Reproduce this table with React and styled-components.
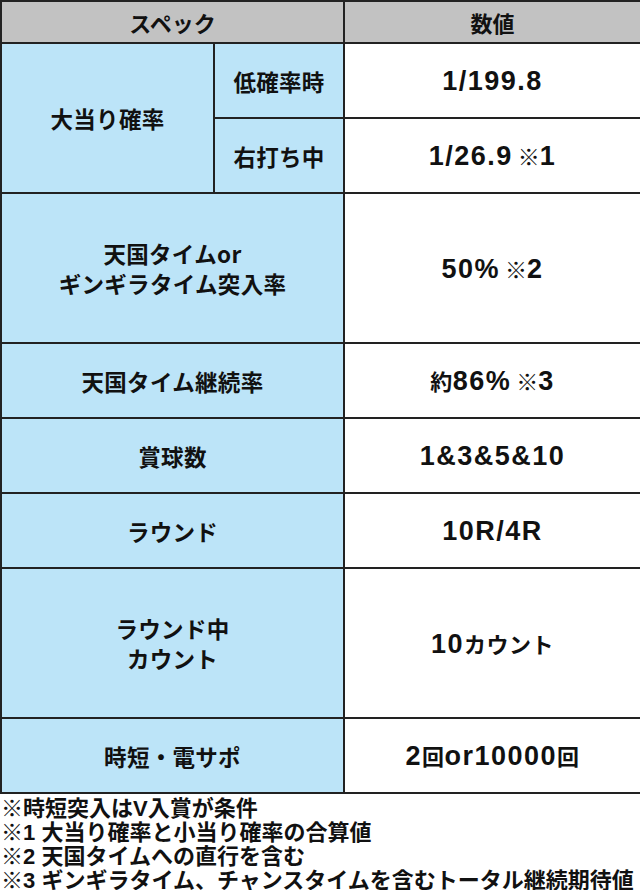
import React from "react";
import styled, { createGlobalStyle } from "styled-components";

const GlobalStyle = createGlobalStyle`
  html, body {
    margin: 0;
    padding: 0;
    background: #ffffff;
  }
  body {
    font-family: "Liberation Sans", "Noto Sans CJK JP", sans-serif;
    color: #111111;
  }
`;

const Page = styled.div`
  width: 640px;
  height: 890px;
  overflow: hidden;
`;

const Table = styled.table`
  width: 640px;
  border-collapse: collapse;
  table-layout: fixed;
`;

const Head = styled.th`
  height: 40px;
  padding: 0;
  background: #c2c2c2;
  border: 2px solid #222222;
  font-family: "Noto Sans CJK JP", sans-serif;
  font-size: 22px;
  font-weight: 700;
  line-height: 26px;
  text-align: center;
  vertical-align: middle;
`;

const Label = styled.td`
  height: ${(p) => p.$h}px;
  padding: 0;
  background: #bce4f8;
  border: 2px solid #222222;
  font-family: "Noto Sans CJK JP", sans-serif;
  font-size: 22.5px;
  font-weight: 700;
  line-height: 30px;
  letter-spacing: 0.3px;
  text-align: center;
  vertical-align: middle;
`;

const Value = styled.td`
  height: ${(p) => p.$h}px;
  padding: 0;
  background: #ffffff;
  border: 2px solid #222222;
  font-family: "Liberation Sans", "Noto Sans CJK JP", sans-serif;
  font-size: 27px;
  font-weight: 700;
  line-height: 30px;
  letter-spacing: 1.5px;
  text-align: center;
  vertical-align: middle;
`;

const Ja = styled.span`
  font-family: "Noto Sans CJK JP", sans-serif;
  font-size: 22px;
  letter-spacing: 0.5px;
`;

const Mark = styled.span`
  font-family: "Noto Sans CJK JP", sans-serif;
  font-size: 22px;
  font-weight: 400;
  letter-spacing: 0;
  margin-left: 5px;
`;

const Notes = styled.div`
  padding: 0 0 0 1px;
`;

const NoteLine = styled.div`
  height: 24px;
  font-family: "Liberation Sans", "Noto Sans CJK JP", sans-serif;
  font-size: 22px;
  font-weight: 700;
  line-height: 24px;
  white-space: nowrap;
`;

const NoteMark = styled.span`
  font-family: "Noto Sans CJK JP", sans-serif;
  font-weight: 400;
`;

const notes = [
  ["", "時短突入はV入賞が条件"],
  ["1 ", "大当り確率と小当り確率の合算値"],
  ["2 ", "天国タイムへの直行を含む"],
  ["3 ", "ギンギラタイム、チャンスタイムを含むトータル継続期待値"],
];

export default function App() {
  return (
    <Page>
      <GlobalStyle />
      <Table>
        <colgroup>
          <col style={{ width: 213 }} />
          <col style={{ width: 130 }} />
          <col style={{ width: 297 }} />
        </colgroup>
        <tbody>
          <tr>
            <Head colSpan={2}>スペック</Head>
            <Head>数値</Head>
          </tr>
          <tr>
            <Label rowSpan={2} $h={73}>大当り確率</Label>
            <Label $h={73}>低確率時</Label>
            <Value $h={73}>1/199.8</Value>
          </tr>
          <tr>
            <Label $h={73}>右打ち中</Label>
            <Value $h={73}>
              1/26.9<Mark>※</Mark>1
            </Value>
          </tr>
          <tr>
            <Label colSpan={2} $h={148}>
              天国タイムor
              <br />
              ギンギラタイム突入率
            </Label>
            <Value $h={148}>
              50%<Mark>※</Mark>2
            </Value>
          </tr>
          <tr>
            <Label colSpan={2} $h={73}>天国タイム継続率</Label>
            <Value $h={73}>
              <Ja>約</Ja>86%<Mark>※</Mark>3
            </Value>
          </tr>
          <tr>
            <Label colSpan={2} $h={73}>賞球数</Label>
            <Value $h={73}>1&amp;3&amp;5&amp;10</Value>
          </tr>
          <tr>
            <Label colSpan={2} $h={73}>ラウンド</Label>
            <Value $h={73}>10R/4R</Value>
          </tr>
          <tr>
            <Label colSpan={2} $h={148}>
              ラウンド中
              <br />
              カウント
            </Label>
            <Value $h={148}>
              10<Ja>カウント</Ja>
            </Value>
          </tr>
          <tr>
            <Label colSpan={2} $h={73}>時短・電サポ</Label>
            <Value $h={73}>
              2<Ja>回</Ja>or10000<Ja>回</Ja>
            </Value>
          </tr>
        </tbody>
      </Table>
      <Notes>
        {notes.map(([num, text]) => (
          <NoteLine key={text}>
            <NoteMark>※</NoteMark>
            {num}
            {text}
          </NoteLine>
        ))}
      </Notes>
    </Page>
  );
}
